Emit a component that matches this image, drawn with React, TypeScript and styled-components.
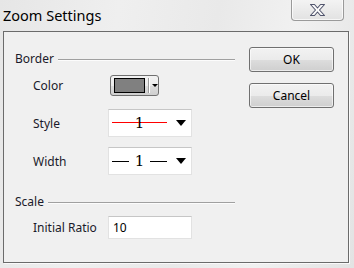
import React from 'react';
import styled, { createGlobalStyle } from 'styled-components';

const GlobalStyle = createGlobalStyle`
    html, body { margin: 0; padding: 0; }
    body { font-family: "Noto Sans", "Liberation Sans", sans-serif; }
`;

const Window = styled.div`
    width: 354px;
    height: 268px;
    display: flex;
    flex-direction: column;
    background: linear-gradient(100deg, #e6e6e6 0%, #efefef 30%, #e9e9e9 55%, #f1f1f1 75%, #e3e3e3 100%);
    overflow: hidden;
`;

const TitleBar = styled.div`
    height: 31px;
    display: flex;
    justify-content: space-between;
    align-items: flex-start;
    flex-shrink: 0;
`;

const Title = styled.div`
    padding: 5px 0 0 3px;
    font-size: 14.5px;
    line-height: 20px;
    color: #000;
`;

const CloseButton = styled.div`
    width: 51px;
    height: 21px;
    margin: -1px 10px 0 0;
    border: 1px solid #9a9a9a;
    border-top: none;
    border-radius: 0 0 4px 4px;
    background: linear-gradient(#f4f4f4, #e2e2e2);
    box-shadow: inset 0 0 0 1px rgba(255, 255, 255, 0.7);
    display: flex;
    align-items: center;
    justify-content: center;
`;

const Client = styled.div`
    flex: 1;
    margin: 0 5px 5px 3px;
    border: 1px solid #6b6b6b;
    box-shadow: 1px 1px 0 #fafafa;
    background: #f0f0f0;
    display: flex;
`;

const LeftColumn = styled.div`
    width: 220px;
    padding: 18px 0 0 11px;
    display: flex;
    flex-direction: column;
`;

const RightColumn = styled.div`
    margin-left: 14px;
    padding-top: 15px;
    display: flex;
    flex-direction: column;
    gap: 11px;
`;

const SectionHeader = styled.div<{ $gap: number }>`
    height: 16px;
    margin-top: ${p => p.$gap}px;
    display: flex;
    align-items: center;
    gap: 4px;
    font-size: 12px;
    color: #1a1a2a;
    &::after {
        content: "";
        flex: 1;
        height: 0;
        margin-top: 3px;
        border-top: 1px solid #a0a0a0;
        border-bottom: 1px solid #fcfcfc;
    }
`;

const Row = styled.div<{ $gap: number }>`
    display: flex;
    align-items: center;
    margin-top: ${p => p.$gap}px;
`;

const Label = styled.div`
    width: 93px;
    flex-shrink: 0;
    box-sizing: border-box;
    padding-left: 18px;
    white-space: nowrap;
    font-size: 12px;
    color: #1a1a2a;
`;

const ColorButton = styled.div`
    box-sizing: border-box;
    width: 49px;
    height: 21px;
    margin-left: 2px;
    border: 1px solid #707070;
    border-radius: 3px;
    background: linear-gradient(#f2f2f2 0%, #ebebeb 50%, #dddddd 51%, #cfcfcf 100%);
    display: flex;
    align-items: center;
    padding: 0 0 0 3px;
`;

const Swatch = styled.div<{ $color: string }>`
    width: 30px;
    height: 13px;
    border: 1px solid #000;
    background: ${p => p.$color};
`;

const Divider = styled.div`
    width: 1px;
    height: 15px;
    margin-left: 3px;
    background: #9c9c9c;
    box-shadow: 1px 0 0 #fff;
`;

const SmallArrow = styled.div`
    margin-left: 3px;
    width: 0;
    height: 0;
    border-left: 3px solid transparent;
    border-right: 3px solid transparent;
    border-top: 3px solid #000;
`;

const Select = styled.div`
    box-sizing: border-box;
    width: 84px;
    height: 28px;
    background: #fff;
    border: 1px solid #e2e2e2;
    border-top-color: #c6c6c6;
    display: flex;
    align-items: center;
    padding: 0 5px 0 3px;
`;

const Preview = styled.div`
    position: relative;
    width: 55px;
    height: 100%;
    display: flex;
    align-items: center;
    justify-content: center;
    gap: 6px;
`;

const RedLine = styled.div`
    position: absolute;
    left: 0;
    right: 0;
    top: 12px;
    height: 1px;
    background-color: #ff0000;
    z-index: 1;
`;

const Num = styled.span`
    position: relative;
    z-index: 2;
    font-family: "DejaVu Serif", "Liberation Serif", serif;
    font-size: 15px;
    line-height: 16px;
    color: #000;
`;

const Dash = styled.div`
    width: 17px;
    height: 1px;
    background: #000;
`;

const Arrow = styled.div`
    margin-left: auto;
    width: 0;
    height: 0;
    border-left: 5px solid transparent;
    border-right: 5px solid transparent;
    border-top: 6px solid #000;
`;

const TextInput = styled.input`
    box-sizing: border-box;
    width: 84px;
    height: 23px;
    margin: 0;
    padding: 0 4px;
    background: #fff;
    border: 1px solid #e2e2e2;
    border-top-color: #c6c6c6;
    outline: none;
    font-family: "Noto Sans", "Liberation Sans", sans-serif;
    font-size: 12px;
    color: #000;
`;

const Button = styled.button`
    width: 85px;
    height: 25px;
    margin: 0;
    padding: 0;
    border: 1px solid #707070;
    border-radius: 3px;
    background: linear-gradient(#f2f2f2 0%, #ebebeb 50%, #dddddd 51%, #cfcfcf 100%);
    box-shadow: inset 0 0 0 1px rgba(255, 255, 255, 0.6);
    font-family: "Noto Sans", "Liberation Sans", sans-serif;
    font-size: 12px;
    color: #000;
`;

const CloseIcon = () => (
    <svg width="17" height="14" viewBox="0 0 17 14">
        <path
            d="M1.5 1.5 H5.5 L8.5 5 L11.5 1.5 H15.5 L10.5 7 L15.5 12.5 H11.5 L8.5 9 L5.5 12.5 H1.5 L6.5 7 Z"
            fill="#fbfbfb"
            stroke="#50546c"
            strokeWidth="1.1"
            strokeLinejoin="round"
        />
    </svg>
);

export default function App() {
    return (
        <>
            <GlobalStyle />
            <Window>
                <TitleBar>
                    <Title>Zoom Settings</Title>
                    <CloseButton><CloseIcon /></CloseButton>
                </TitleBar>
                <Client>
                    <LeftColumn>
                        <SectionHeader $gap={0}>Border</SectionHeader>
                        <Row $gap={9}>
                            <Label>Color</Label>
                            <ColorButton>
                                <Swatch $color="#808080" />
                                <Divider />
                                <SmallArrow />
                            </ColorButton>
                        </Row>
                        <Row $gap={13}>
                            <Label>Style</Label>
                            <Select>
                                <Preview>
                                    <RedLine />
                                    <Num>1</Num>
                                </Preview>
                                <Arrow />
                            </Select>
                        </Row>
                        <Row $gap={10}>
                            <Label>Width</Label>
                            <Select>
                                <Preview>
                                    <Dash />
                                    <Num>1</Num>
                                    <Dash />
                                </Preview>
                                <Arrow />
                            </Select>
                        </Row>
                        <SectionHeader $gap={18}>Scale</SectionHeader>
                        <Row $gap={7}>
                            <Label>Initial Ratio</Label>
                            <TextInput defaultValue="10" />
                        </Row>
                    </LeftColumn>
                    <RightColumn>
                        <Button>OK</Button>
                        <Button>Cancel</Button>
                    </RightColumn>
                </Client>
            </Window>
        </>
    );
}
